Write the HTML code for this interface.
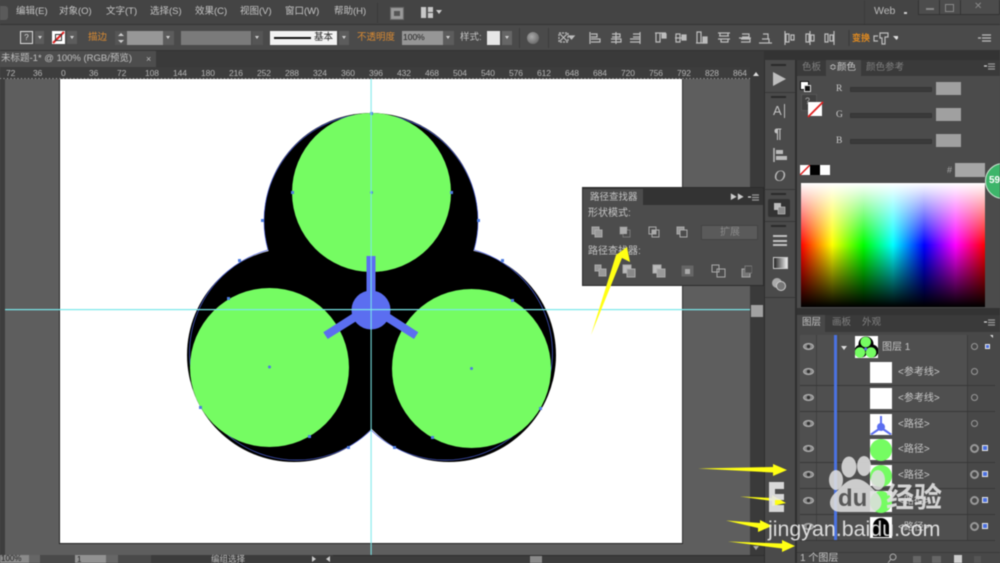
<!DOCTYPE html>
<html><head><meta charset="utf-8">
<style>
html,body{margin:0;padding:0;background:#484848}
#r{position:relative;width:1000px;height:563px;overflow:hidden;background:#484848;font-family:"Liberation Sans","Noto Sans CJK SC",sans-serif;color:#c4c4c4;font-size:9.5px;filter:blur(.5px)}
#r div,#r span,#r svg{position:absolute}
#r span{white-space:nowrap;line-height:12px}
.o{color:#d98a32}
.dd{background:#5c5c5c;width:10px;height:13px}
.dd:after{content:"";position:absolute;left:2.5px;top:5px;border-left:2.5px solid transparent;border-right:2.5px solid transparent;border-top:3px solid #d0d0d0}
.rl span{font-size:8.5px;color:#b5b5b5;top:0;letter-spacing:-.1px}
.row{position:absolute;left:800px;width:195px;height:25px;background:#4f4f4f;border-bottom:1px solid #383838}
.eye{left:3px;top:8px;width:9px;height:5px;border:1px solid #b4b4b4;border-radius:50%;background:radial-gradient(circle,#333 0 1.5px,#8a8a8a 2px)}
.th{left:70px;top:2px;width:22px;height:21px;background:#fff}
.col{left:16px;top:0;width:1px;height:25px;background:#3f3f3f}
.col2{left:38px;top:0;width:1px;height:25px;background:#444}
.rc{left:167px;top:0;width:28px;height:25px;background:#484848;border-left:1px solid #3c3c3c}
.tg{left:3px;top:8px;width:5px;height:5px;border:1.5px solid #999;border-radius:50%}
.tg2{left:2px;top:7px;width:5px;height:5px;border:2.5px solid #999;border-radius:50%}
.sq{left:14px;top:8px;width:4px;height:4px;border:1.5px solid #e8e8e8;background:#4a6fe0}
.lb{left:98px;top:7px;color:#c8c8c8;font-size:10px}
.ic{stroke:#bdbdbd;fill:none;stroke-width:1.2}
</style></head><body><div id="r">

<!-- top menu -->
<div style="left:0;top:0;width:1000px;height:24px;background:#444"></div>
<div style="left:0;top:24px;width:1000px;height:1px;background:#333"></div>
<div style="left:0;top:6px;width:8px;height:14px;background:#5a5a5a;border-radius:0 3px 3px 0"></div>
<span style="left:16px;top:6px">编辑(E)</span>
<span style="left:59px;top:6px">对象(O)</span>
<span style="left:106px;top:6px">文字(T)</span>
<span style="left:150px;top:6px">选择(S)</span>
<span style="left:195px;top:6px">效果(C)</span>
<span style="left:240px;top:6px">视图(V)</span>
<span style="left:285px;top:6px">窗口(W)</span>
<span style="left:334px;top:6px">帮助(H)</span>
<div style="left:377px;top:3px;width:1px;height:20px;background:#3a3a3a"></div>
<div style="left:390px;top:7px;width:12px;height:11px;background:#999;border:1px solid #666"><div style="left:3px;top:3px;width:6px;height:5px;background:#555"></div></div>
<div style="left:421px;top:7px;width:12px;height:11px;background:#c8c8c8"><div style="left:5px;top:0;width:2px;height:11px;background:#555"></div><div style="left:7px;top:5px;width:5px;height:1px;background:#555"></div></div>
<div style="left:436px;top:10px;border-left:3px solid transparent;border-right:3px solid transparent;border-top:4px solid #ccc"></div>
<span style="left:874px;top:5px;font-size:10.5px;color:#bbb">Web</span>
<div style="left:904px;top:12px;width:3px;height:2px;background:#ccc"></div>
<div style="left:864px;top:0;width:1px;height:24px;background:#3c3c3c"></div>
<div style="left:918px;top:0;width:80px;height:14px;background:#4c4c4c;border:1px solid #333;border-top:0"></div>
<div style="left:926px;top:8px;width:8px;height:1.5px;background:#888"></div>
<div style="left:939px;top:0;width:1px;height:14px;background:#333"></div>
<div style="left:960px;top:0;width:1px;height:14px;background:#333"></div>
<div style="left:945px;top:4px;width:7px;height:6px;border:1px solid #888"></div>
<span style="left:974px;top:1px;color:#888;font-size:10px">✕</span>

<!-- control bar -->
<div style="left:0;top:25px;width:1000px;height:25px;background:#4a4a4a"></div>
<div style="left:20px;top:31px;width:11px;height:11px;border:1px solid #ddd;background:#555;color:#ddd;font-size:8px;line-height:11px;text-align:center">?</div>
<div class="dd" style="left:35px;top:31px;width:9px"></div>
<div style="left:52px;top:31px;width:13px;height:13px;background:#fff"></div>
<svg style="left:52px;top:31px" width="13" height="13"><path d="M1 12L12 1" stroke="#e02020" stroke-width="2"/><rect x="3.5" y="3.5" width="6" height="6" fill="none" stroke="#333"/></svg>
<div class="dd" style="left:67px;top:31px"></div>
<span class="o" style="left:88px;top:32px">描边</span>
<div style="left:115px;top:31px;width:12px;height:14px;background:#555"></div>
<div style="left:118px;top:33px;border-left:3px solid transparent;border-right:3px solid transparent;border-bottom:3px solid #ccc"></div>
<div style="left:118px;top:40px;border-left:3px solid transparent;border-right:3px solid transparent;border-top:3px solid #ccc"></div>
<div style="left:127px;top:31px;width:36px;height:14px;background:#979797"></div>
<div class="dd" style="left:163px;top:31px;width:11px;height:14px"></div>
<div style="left:181px;top:31px;width:70px;height:14px;background:#7a7a7a"></div>
<div class="dd" style="left:252px;top:31px;width:11px;height:14px;background:#555"></div>
<div style="left:270px;top:31px;width:67px;height:14px;background:#f2f2f2"></div>
<div style="left:274px;top:37px;width:37px;height:1.5px;background:#111"></div>
<span style="left:314px;top:32px;color:#222">基本</span>
<div class="dd" style="left:339px;top:31px;height:14px"></div>
<span class="o" style="left:357px;top:32px">不透明度</span>
<div style="left:402px;top:31px;width:41px;height:14px;background:#969696"></div>
<span style="left:403px;top:31px;color:#222;font-size:8.5px">100%</span>
<div class="dd" style="left:443px;top:31px;width:11px;height:14px"></div>
<span style="left:460px;top:32px">样式:</span>
<div style="left:487px;top:31px;width:13px;height:14px;background:#e6e6e6"></div>
<div class="dd" style="left:502px;top:31px;height:14px;width:10px;background:#666"></div>
<div style="left:519px;top:28px;width:1px;height:20px;background:#3c3c3c"></div>
<div style="left:527px;top:32px;width:12px;height:12px;border-radius:50%;background:radial-gradient(circle at 40% 40%,#aaa,#555)"></div>
<div style="left:548px;top:28px;width:1px;height:20px;background:#3c3c3c"></div>
<svg style="left:558px;top:30px" width="340" height="16" class="ic">
<rect x="1" y="3" width="9" height="9" stroke-dasharray="2 1"/><path d="M2 4l7 7M9 4l-7 7"/><path d="M11 6h5l-2.500 3z" fill="#bbb"/>
<path d="M32 2v12M33 4h6v3h-6M33 9h9v3h-9"/>
<path d="M58 2v12M54 4h8v3h-8M53 9h10v3H53"/>
<path d="M82 2v12M75 4h7v3h-7M72 9h10v3H72"/>
<path d="M97 3h11M98 3v9h4V3"/><rect x="104" y="4" width="4" height="4" fill="#bbb"/>
<path d="M117 8h11M118 4h4v8h-4z"/><rect x="124" y="5" width="4" height="5" fill="#bbb"/>
<path d="M138 13h11M139 2h4v11h-4z"/><rect x="145" y="7" width="4" height="6" fill="#bbb"/>
<path d="M160 3h12M162 3v3M170 3v3M161 6h10M160 9h12M163 9v3h7v-3"/>
<path d="M181 8h12M184 4h7v3h-7M183 9h9v3h-9"/>
<path d="M201 13h13M204 9h7v4M205 4h5v5"/>
<path d="M227 1v14M228 4h3v8h-3zM233 5h3v5h-3z"/>
<path d="M252 1v14M248 4h3v8h-3zM253 5h3v6h-3z"/>
<path d="M276 1v14M267 4h3v8h-3zM272 5h3v6h-3z"/>
<path d="M291 0v16" stroke="#3c3c3c"/>
<path d="M322 3h8v4h-3v7h-3v-6h-2zM320 6h-4v5h4"/>
<path d="M335 6h7l-3.500 4z" fill="#ddd" stroke="none"/>
</svg>
<span style="left:852px;top:32px;font-size:9px;color:#e08a20;font-weight:bold">变换</span>
<svg style="left:978px;top:32px" width="14" height="12" class="ic"><path d="M4 3h9M4 6h9M4 9h9M0 6h3"/></svg>
<div style="left:0;top:50px;width:1000px;height:1px;background:#333"></div>

<!-- tab bar -->
<div style="left:0;top:51px;width:764px;height:16px;background:#3a3a3a"></div>
<div style="left:0;top:51px;width:156px;height:16px;background:#4d4d4d"></div>
<span style="left:1px;top:53px;font-size:9.5px;color:#c0c0c0">未标题-1* @ 100% (RGB/预览)</span>
<span style="left:146px;top:53px;font-size:9px;color:#bbb">×</span>

<!-- ruler -->
<div style="left:0;top:67px;width:750px;height:12px;background:#3d3d3d"></div>
<div style="left:0;top:78px;width:750px;height:1px;background-image:repeating-linear-gradient(90deg,#aaa 0 1px,transparent 1px 3.5px)"></div>
<div class="rl" style="left:0;top:67px;width:750px;height:12px">
<span style="left:6px">72</span><span style="left:33px">36</span><span style="left:61px">0</span><span style="left:89px">36</span><span style="left:117px">72</span><span style="left:145px">108</span><span style="left:173px">144</span><span style="left:201px">180</span><span style="left:229px">216</span><span style="left:257px">252</span><span style="left:285px">288</span><span style="left:313px">324</span><span style="left:341px">360</span><span style="left:369px">396</span><span style="left:397px">432</span><span style="left:425px">468</span><span style="left:453px">504</span><span style="left:481px">540</span><span style="left:509px">576</span><span style="left:537px">612</span><span style="left:565px">648</span><span style="left:593px">684</span><span style="left:621px">720</span><span style="left:649px">756</span><span style="left:677px">792</span><span style="left:705px">828</span><span style="left:733px">864</span>
</div>
<div style="left:0;top:79px;width:5px;height:476px;background:#3d3d3d"></div>
<!-- canvas -->
<div style="left:5px;top:79px;width:745px;height:476px;background:#5e5e5e"></div>
<div style="left:59px;top:79px;width:624px;height:465px;background:#fff;border-left:1px solid #222;border-bottom:1px solid #222;border-right:1px solid #333;box-sizing:border-box"></div>

<svg style="left:0;top:0" width="1000" height="563">
<g fill="#000">
<circle cx="371" cy="220" r="107"/><circle cx="294" cy="355" r="107"/><circle cx="449" cy="355" r="107"/><path d="M300 250L440 250L470 340L371 425L280 340z"/>
</g>
<g fill="none" stroke="#4a5fd8" stroke-width=".7"><path d="M268 250A107 107 0 1 1 474 250"/><path d="M371 430A107 107 0 1 1 268 250"/><path d="M371 430A107 107 0 1 0 474 250"/></g>
<g fill="#75fc62"><circle cx="371.500" cy="192.500" r="79.500"/><circle cx="269.500" cy="367.500" r="79.500"/><circle cx="471.500" cy="368.500" r="79.500"/></g>
<g fill="#5b6ef0"><circle cx="371" cy="310" r="19.500"/><rect x="366.500" y="256" width="9" height="50"/><path d="M327.700 339L323.300 332.300L366 305L371 312zM414 339L418.300 332.300L376 305L371 312z"/></g>
<g fill="#4f7de0"><circle cx="371.500" cy="192.500" r="1.500"/><circle cx="269.500" cy="367" r="1.500"/><circle cx="471.500" cy="368.500" r="1.500"/><rect x="370" y="112" width="3" height="3"/><rect x="291" y="191" width="3" height="3"/><rect x="450" y="191" width="3" height="3"/><rect x="261" y="219" width="3" height="3"/><rect x="477" y="219" width="3" height="3"/><rect x="238" y="259" width="3" height="3"/><rect x="501" y="259" width="3" height="3"/><rect x="227" y="297" width="3" height="3"/><rect x="511" y="299" width="3" height="3"/><rect x="199" y="406" width="3" height="3"/><rect x="539" y="407" width="3" height="3"/><rect x="308" y="435" width="3" height="3"/><rect x="431" y="436" width="3" height="3"/><rect x="347" y="446" width="3" height="3"/><rect x="393" y="446" width="3" height="3"/></g>
<rect x="5" y="309" width="745" height="1.200" fill="#7ae8ea"/>
<rect x="370.500" y="79" width="1.200" height="476" fill="#7ae8ea" opacity=".85"/>
</svg>

<!-- right scrollbar -->
<div style="left:750px;top:67px;width:14px;height:488px;background:#3a3a3a"></div>
<div style="left:753px;top:72px;border-left:3.500px solid transparent;border-right:3.500px solid transparent;border-bottom:4px solid #ddd"></div>
<div style="left:751px;top:305px;width:12px;height:12px;background:#a2a2a2"></div>
<div style="left:753px;top:546px;border-left:3.500px solid transparent;border-right:3.500px solid transparent;border-top:4px solid #aaa"></div>
<!-- status -->
<div style="left:0;top:555px;width:764px;height:8px;background:#3c3c3c"></div>
<div style="left:0;top:555px;width:29px;height:8px;background:#8a8a8a"></div>
<span style="left:1px;top:553px;font-size:8px;color:#222">100%</span>
<div style="left:29px;top:555px;width:11px;height:8px;background:#666"></div>
<div style="left:40px;top:555px;width:35px;height:8px;background:#4a4a4a"></div>
<div style="left:75px;top:555px;width:31px;height:8px;background:#929292"></div>
<span style="left:77px;top:554px;font-size:8px;color:#222">1</span>
<div style="left:106px;top:555px;width:12px;height:8px;background:#666"></div>
<div style="left:118px;top:555px;width:33px;height:8px;background:#4a4a4a"></div>
<span style="left:211px;top:553px;font-size:8.500px;color:#bbb">编组选择</span>
<div style="left:312px;top:556px;border-top:3px solid transparent;border-bottom:3px solid transparent;border-left:4px solid #ccc"></div>
<div style="left:326px;top:556px;border-top:3px solid transparent;border-bottom:3px solid transparent;border-right:4px solid #ccc"></div>
<div style="left:530px;top:555px;width:12px;height:8px;background:#8a8a8a"></div>
<div style="left:333px;top:555px;width:431px;height:1px;background:#2e2e2e"></div>

<!-- dock -->
<div style="left:764px;top:51px;width:236px;height:9px;background:#333"></div>
<div style="left:764px;top:60px;width:31px;height:503px;background:#4a4a4a;border-left:1px solid #2e2e2e;box-sizing:border-box"></div>
<div style="left:795px;top:60px;width:2px;height:503px;background:#2f2f2f"></div>
<div style="left:771px;top:64px;width:15px;height:1.500px;background:#2a2a2a"></div>
<div style="left:773px;top:72px;border-top:7px solid transparent;border-bottom:7px solid transparent;border-left:13px solid #bdbdbd"></div>
<div style="left:765px;top:92px;width:30px;height:1px;background:#383838"></div>
<div style="left:771px;top:96px;width:15px;height:1.500px;background:#2a2a2a"></div>
<span style="left:773px;top:103px;font-size:13px;color:#c2c2c2;line-height:16px">A</span>
<div style="left:784px;top:104px;width:1px;height:14px;background:#bbb"></div>
<span style="left:774px;top:125px;font-size:14px;color:#c2c2c2;font-weight:bold;line-height:16px">¶</span>
<svg style="left:773px;top:147px" width="16" height="16"><path d="M1 1v14" stroke="#bbb" stroke-width="1.500"/><rect x="3" y="3" width="7" height="4" fill="#bbb"/><rect x="3" y="9" width="11" height="4" fill="#bbb"/></svg>
<span style="left:774px;top:169px;font-size:16px;color:#b8b8b8;font-style:italic;font-family:'Liberation Serif',serif;line-height:16px">O</span>
<div style="left:765px;top:189px;width:30px;height:1px;background:#383838"></div>
<div style="left:771px;top:193px;width:15px;height:1.500px;background:#2a2a2a"></div>
<div style="left:768px;top:199px;width:22px;height:18px;background:#333;border-radius:2px"></div>
<svg style="left:773px;top:202px" width="14" height="13"><rect x="1" y="1" width="7" height="7" fill="#bbb"/><rect x="5" y="5" width="7" height="7" fill="#8a8a8a" stroke="#ccc" stroke-width=".6"/></svg>
<div style="left:765px;top:221px;width:30px;height:1px;background:#383838"></div>
<div style="left:771px;top:225px;width:15px;height:1.500px;background:#2a2a2a"></div>
<div style="left:773px;top:235px;width:14px;height:1.500px;background:#c0c0c0"></div>
<div style="left:773px;top:240px;width:14px;height:2px;background:#c0c0c0"></div>
<div style="left:773px;top:244px;width:14px;height:2px;background:#c0c0c0"></div>
<div style="left:773px;top:257px;width:13px;height:10px;background:linear-gradient(90deg,#222,#eee);border:.5px solid #ccc"></div>
<div style="left:772px;top:278px;width:10px;height:10px;border-radius:50%;background:#aaa"></div>
<div style="left:776px;top:281px;width:8px;height:8px;border-radius:50%;background:#777;border:1.500px solid #ccc"></div>
<div style="left:765px;top:297px;width:30px;height:1px;background:#383838"></div>

<!-- color panel -->
<div style="left:797px;top:60px;width:203px;height:16px;background:#3a3a3a"></div>
<div style="left:797px;top:76px;width:203px;height:232px;background:#4b4b4b"></div>
<div style="left:826px;top:60px;width:35px;height:16px;background:#4b4b4b"></div>
<span style="left:802px;top:62px;font-size:9.500px;color:#808080">色板</span>
<span style="left:829px;top:62px;font-size:9.500px;color:#ccc">≎颜色</span>
<span style="left:866px;top:62px;font-size:9.500px;color:#808080">颜色参考</span>
<svg style="left:984px;top:62px" width="12" height="9" class="ic"><path d="M4 2h7M4 4.500h7M4 7h7" stroke="#999"/><path d="M0 4h3" stroke="#ddd"/></svg>
<div style="left:800px;top:81px;width:7px;height:7px;background:#fff;border:1.500px solid #111"></div>
<div style="left:804px;top:85px;width:5px;height:5px;background:#111;border:1px solid #ddd"></div>
<div style="left:801px;top:94px;width:14px;height:15px;background:#404040;border:1px solid #555"></div>
<span style="left:805px;top:95px;font-size:9px;color:#aaa">?</span>
<div style="left:808px;top:102px;width:14px;height:14px;background:#fff"></div>
<svg style="left:807px;top:101px" width="17" height="17"><path d="M1 16L16 1" stroke="#e02020" stroke-width="1.800"/></svg>
<span style="left:836px;top:83px;color:#ccc;font-family:'Liberation Serif',serif">R</span>
<span style="left:836px;top:109px;color:#ccc;font-family:'Liberation Serif',serif">G</span>
<span style="left:836px;top:135px;color:#ccc;font-family:'Liberation Serif',serif">B</span>
<div style="left:850px;top:87px;width:80px;height:3px;background:#3a3a3a;border:1px solid #353535"></div>
<div style="left:850px;top:113px;width:80px;height:3px;background:#3a3a3a;border:1px solid #353535"></div>
<div style="left:850px;top:139px;width:80px;height:3px;background:#3a3a3a;border:1px solid #353535"></div>
<div style="left:936px;top:82px;width:25px;height:13px;background:#a0a0a0"></div>
<div style="left:936px;top:108px;width:25px;height:13px;background:#a0a0a0"></div>
<div style="left:936px;top:134px;width:25px;height:13px;background:#a0a0a0"></div>
<div style="left:800px;top:165px;width:10px;height:10px;background:#fff"></div>
<svg style="left:800px;top:165px" width="10" height="10"><path d="M0 10L10 0" stroke="#e02020" stroke-width="1.500"/></svg>
<div style="left:810px;top:165px;width:10px;height:10px;background:#000"></div>
<div style="left:820px;top:165px;width:10px;height:10px;background:#fff"></div>
<span style="left:947px;top:164px;color:#aaa;font-size:9px">#</span>
<div style="left:955px;top:163px;width:30px;height:14px;background:#a6a6a6"></div>
<div style="left:801px;top:183px;width:184px;height:124px;background:linear-gradient(180deg,#fff 0,rgba(255,255,255,0) 50%,rgba(0,0,0,0) 50%,#000 100%),linear-gradient(90deg,#f00 0,#ff0 17%,#0f0 34%,#0ff 50%,#00f 67%,#f0f 84%,#f00 100%)"></div>
<div style="left:985px;top:163px;width:36px;height:36px;border-radius:50%;background:#3db56a;border:1.500px solid #cfe8d6;box-sizing:border-box"></div>
<span style="left:989px;top:175px;color:#fff;font-weight:bold;font-size:10px">59</span>
<div style="left:797px;top:308px;width:203px;height:8px;background:#333"></div>

<!-- layers panel -->
<div style="left:797px;top:315px;width:203px;height:17px;background:#3a3a3a"></div>
<div style="left:797px;top:332px;width:203px;height:231px;background:#484848"></div>
<div style="left:797px;top:315px;width:28px;height:17px;background:#484848"></div>
<span style="left:802px;top:317px;font-size:9.500px;color:#c4c4c4">图层</span>
<span style="left:832px;top:317px;font-size:9.500px;color:#808080">画板</span>
<span style="left:862px;top:317px;font-size:9.500px;color:#808080">外观</span>
<svg style="left:984px;top:318px" width="12" height="9" class="ic"><path d="M4 2h7M4 4.500h7M4 7h7" stroke="#999"/><path d="M0 4h3" stroke="#ddd"/></svg>

<div class="row" style="top:335px"><div class="eye"></div><div class="col"></div><div class="col2"></div><div class="rc"><div class="tg"></div><div class="sq" style="left:17px;width:3px;height:3px;top:9px"></div></div>
<div style="left:41px;top:11px;border-left:3px solid transparent;border-right:3px solid transparent;border-top:4px solid #ddd"></div>
<div style="left:55px;top:1px;width:23px;height:22px;background:#fff"><svg style="left:0;top:0" width="23" height="22"><circle cx="11" cy="8" r="7.500" fill="#000"/><circle cx="6" cy="15" r="6.500" fill="#000"/><circle cx="17" cy="15" r="6.500" fill="#000"/><circle cx="10.700" cy="6" r="5.300" fill="#75fc62"/><circle cx="5" cy="16.500" r="5.300" fill="#75fc62"/><circle cx="16" cy="16.500" r="5.300" fill="#75fc62"/><circle cx="10.700" cy="13" r="1.500" fill="#5b6ef0"/></svg></div>
<span style="left:82px;top:7px;font-size:10px">图层 1</span></div>
<div class="row" style="top:360px"><div class="eye"></div><div class="col"></div><div class="col2"></div><div class="rc"><div class="tg"></div></div><div class="th"></div><span class="lb">&lt;参考线&gt;</span></div>
<div class="row" style="top:386px"><div class="eye"></div><div class="col"></div><div class="col2"></div><div class="rc"><div class="tg"></div></div><div class="th"></div><span class="lb">&lt;参考线&gt;</span></div>
<div class="row" style="top:412px"><div class="eye"></div><div class="col"></div><div class="col2"></div><div class="rc"><div class="tg"></div></div><div class="th"><svg style="left:0;top:0" width="22" height="21"><g fill="#5b6ef0"><circle cx="11" cy="13" r="4"/><rect x="10" y="2" width="2" height="9"/><path d="M0 20l10-7 1 2-9 6zM22 20l-10-7-1 2 9 6z"/></g></svg></div><span class="lb">&lt;路径&gt;</span></div>
<div class="row" style="top:437px"><div class="eye"></div><div class="col"></div><div class="col2"></div><div class="rc"><div class="tg2"></div><div class="sq"></div></div><div class="th"><div style="left:0;top:0;width:22px;height:22px;border-radius:50%;background:#75fc62"></div></div><span class="lb">&lt;路径&gt;</span></div>
<div class="row" style="top:463px"><div class="eye"></div><div class="col"></div><div class="col2"></div><div class="rc"><div class="tg2"></div><div class="sq"></div></div><div class="th"><div style="left:0;top:0;width:22px;height:22px;border-radius:50%;background:#75fc62"></div></div><span class="lb">&lt;路径&gt;</span></div>
<div class="row" style="top:489px"><div class="eye"></div><div class="col"></div><div class="col2"></div><div class="rc"><div class="tg2"></div><div class="sq"></div></div><div class="th"><div style="left:0;top:0;width:22px;height:22px;border-radius:50%;background:#75fc62"></div></div><span class="lb">&lt;路径&gt;</span></div>
<div class="row" style="top:515px"><div class="eye"></div><div class="col"></div><div class="col2"></div><div class="rc"><div class="tg2"></div><div class="sq"></div></div><div class="th"><svg style="left:0;top:0" width="22" height="21"><path d="M3 20V9a8 8 0 0 1 16 0v11z" fill="#000"/></svg></div><span class="lb">&lt;路径&gt;</span></div>
<div style="left:834px;top:335px;width:3px;height:205px;background:#4a72e0"></div>
<div style="left:990px;top:335px;border-top:3px solid #ddd;border-left:3px solid transparent"></div>
<div style="left:797px;top:552px;width:203px;height:1px;background:#3a3a3a"></div>
<span style="left:800px;top:553px;font-size:10px;color:#c4c4c4">1 个图层</span>
<svg style="left:886px;top:553px" width="100" height="10"><circle cx="7" cy="4" r="3" fill="none" stroke="#aaa"/><path d="M5 6l-3 4" stroke="#aaa"/><rect x="27" y="3" width="8" height="7" fill="#666"/><rect x="46" y="3" width="9" height="7" fill="#666"/><rect x="68" y="2" width="8" height="8" fill="#ccc"/><rect x="88" y="3" width="7" height="7" fill="#555"/></svg>

<!-- pathfinder -->
<div style="left:583px;top:188px;width:180px;height:97px;background:#4c4c4c;box-shadow:0 0 0 1px #2c2c2c"></div>
<div style="left:583px;top:188px;width:180px;height:17px;background:#333"></div>
<div style="left:583px;top:189px;width:60px;height:16px;background:#4c4c4c"></div>
<span style="left:590px;top:192px;font-size:9.500px;color:#c4c4c4">路径查找器</span>
<span style="left:730px;top:192px;font-size:7px;color:#ccc">▶▶</span>
<svg style="left:748px;top:193px" width="12" height="9" class="ic"><path d="M4 2h7M4 4.500h7M4 7h7" stroke="#999"/><path d="M0 4h3" stroke="#ddd"/></svg>
<span style="left:588px;top:208px;font-size:10px;color:#c4c4c4">形状模式:</span>
<span style="left:588px;top:246px;font-size:10px;color:#c4c4c4">路径查找器:</span>
<svg style="left:590px;top:226px" width="100" height="14"><g stroke="#aaa" fill="none"><rect x="2" y="1" width="7" height="7" fill="#999"/><rect x="5" y="4" width="7" height="7" fill="#999"/><path d="M30 1h7v3h3v7h-7V8h-3z" stroke="#777"/><rect x="30" y="1" width="7" height="7" fill="#aaa" stroke="none"/><rect x="59" y="1" width="7" height="7"/><rect x="62" y="4" width="7" height="7"/><rect x="62" y="4" width="4" height="4" fill="#aaa" stroke="none"/><rect x="87" y="1" width="7" height="7" fill="#999"/><rect x="90" y="4" width="7" height="7" fill="#4c4c4c"/></g></svg>
<div style="left:701px;top:225px;width:57px;height:15px;background:#5a5a5a;border:1px solid #444;box-sizing:border-box"></div>
<span style="left:720px;top:227px;font-size:10px;color:#8a8a8a">扩展</span>
<svg style="left:590px;top:264px" width="162" height="14"><g stroke="#aaa" fill="none"><rect x="5" y="1" width="6" height="6" fill="#999"/><rect x="9" y="5" width="7" height="7" fill="#999"/><rect x="33" y="1" width="8" height="8" fill="#bbb"/><rect x="37" y="5" width="8" height="8" fill="#888"/><rect x="63" y="1" width="8" height="8" fill="#bbb"/><rect x="67" y="5" width="8" height="8" fill="#999"/><rect x="92" y="2" width="11" height="10" fill="#666" stroke="#666"/><rect x="95" y="5" width="5" height="5" fill="#aaa" stroke="none"/><rect x="122" y="1" width="7" height="7"/><rect x="127" y="5" width="8" height="8"/><rect x="152" y="5" width="8" height="8" fill="#777"/><rect x="155" y="2" width="7" height="7" fill="#4c4c4c" stroke="#777"/></g></svg>

<!-- yellow arrows -->
<svg style="left:0;top:0" width="1000" height="563">
<g fill="#ffff14">
<path d="M591 335L616 255L627 247L630 262L622 258z"/>
<path d="M698 468.500L773 467V464L787 470L773 476V472.500z"/>
<path d="M740 496.500L772 498V495L786 503L772 506V501z"/>
<path d="M726 520.500L760 523V520L772 526L758 532V528z"/>
<path d="M728 541.500L782 543.500V540L795 546L782 552V548.500z"/>
</g>
</svg>

<!-- watermark -->
<svg style="left:769px;top:482px" width="16" height="31"><path d="M0 0H15V7H6V12H15V18H6V23H15V30H0z" fill="rgba(232,232,232,.9)"/></svg>
<svg style="left:826px;top:452px" width="64" height="64"><g fill="rgba(222,222,222,.88)"><ellipse cx="23" cy="15" rx="7.500" ry="10.500"/><ellipse cx="38" cy="14" rx="7" ry="10"/><ellipse cx="10" cy="28" rx="7" ry="10"/><ellipse cx="52" cy="28" rx="7" ry="10"/><path d="M30 27c9 0 15 8 21 14 8 8 5 19-7 19H15C3 60 1 49 8 42c7-6 12-15 22-15z"/></g><text x="12" y="54" font-family="Liberation Sans" font-size="24" font-weight="bold" fill="#585858">du</text></svg>
<span style="left:886px;top:483px;font-size:28px;line-height:30px;color:rgba(225,225,225,.9);font-weight:bold">经验</span>
<span style="left:768px;top:516px;font-size:21.400px;line-height:26px;color:rgba(235,235,235,.9)">jingyan.baidu.com</span>
</div></body></html>
